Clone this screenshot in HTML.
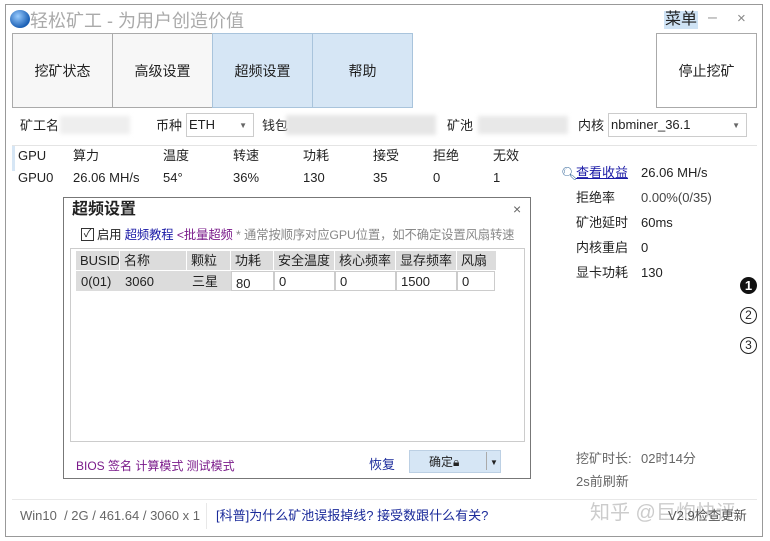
<!DOCTYPE html>
<html><head><meta charset="utf-8"><style>
*{margin:0;padding:0;box-sizing:border-box}
body{width:770px;height:541px;background:#fff;font-family:"Liberation Sans","Noto Sans CJK SC",sans-serif;font-size:13px;color:#222;position:relative;overflow:hidden;line-height:16px}
.a{position:absolute;white-space:nowrap;line-height:16px}
.tab{position:absolute;top:33px;height:75px;width:101px;border:1px solid #aaa;background:#f7f7f7;font-size:14px;display:flex;align-items:center;justify-content:center}
.blue{background:#d6e6f5;border-color:#a9c4dc}
.box{position:absolute;border:1px solid #ccc;background:#fff;height:24px}
.blur{position:absolute;background:#ddd;filter:blur(2px)}
.th{position:absolute;top:251px;height:19px;background:#dcdcdc;border-right:1px solid #fff;padding:2px 4px;font-size:13px;line-height:16px}
.td{position:absolute;top:271px;height:20px;padding:2px 4px;font-size:13px;line-height:16px;border:1px solid #ccc;background:#fff}
.g{background:#dcdcdc;border-color:#dcdcdc}
</style></head><body>
<div class="a" style="left:5px;top:4px;width:758px;height:533px;border:1px solid #999"></div>
<div class="a" style="left:10px;top:10px;width:20px;height:18px;border-radius:50%;background:radial-gradient(circle at 40% 35%,#9cf,#1a5fb4 70%)"></div>
<div class="a" style="left:30px;top:11px;font-size:18px;line-height:20px;color:#aaa">轻松矿工 - 为用户创造价值</div>
<div class="a" style="left:664px;top:11px;font-size:16px;line-height:18px;background:#cfe3f5;padding:0 1px">菜单</div>
<div class="a" style="left:708px;top:10px;font-size:16px;color:#999">–</div>
<div class="a" style="left:737px;top:11px;font-size:15px;color:#888">×</div>
<div class="tab" style="left:12px">挖矿状态</div>
<div class="tab" style="left:112px">高级设置</div>
<div class="tab blue" style="left:212px">超频设置</div>
<div class="tab blue" style="left:312px">帮助</div>
<div class="tab" style="left:656px;background:#fff">停止挖矿</div>
<div class="a" style="left:20px;top:118px">矿工名</div>
<div class="blur" style="left:60px;top:116px;width:70px;height:18px;background:#eee"></div>
<div class="a" style="left:156px;top:118px">币种</div>
<div class="box" style="left:186px;top:113px;width:68px"><span style="position:absolute;left:2px;top:3px">ETH</span><span style="position:absolute;right:6px;top:4px;font-size:8px;color:#666">▼</span></div>
<div class="a" style="left:262px;top:118px">钱包</div>
<div class="blur" style="left:286px;top:115px;width:150px;height:20px;background:#e6e6e6"></div>
<div class="a" style="left:447px;top:118px">矿池</div>
<div class="blur" style="left:478px;top:116px;width:90px;height:18px;background:#e8e8e8"></div>
<div class="a" style="left:578px;top:118px">内核</div>
<div class="box" style="left:608px;top:113px;width:139px"><span style="position:absolute;left:2px;top:3px">nbminer_36.1</span><span style="position:absolute;right:6px;top:4px;font-size:8px;color:#666">▼</span></div>
<div class="a" style="left:12px;top:145px;width:745px;border-top:1px solid #e4e4e4"></div>
<div class="a" style="left:12px;top:146px;width:3px;height:25px;background:#d6e6f5"></div>
<div class="a" style="left:18px;top:148px">GPU</div><div class="a" style="left:73px;top:148px">算力</div><div class="a" style="left:163px;top:148px">温度</div><div class="a" style="left:233px;top:148px">转速</div><div class="a" style="left:303px;top:148px">功耗</div><div class="a" style="left:373px;top:148px">接受</div><div class="a" style="left:433px;top:148px">拒绝</div><div class="a" style="left:493px;top:148px">无效</div>
<div class="a" style="left:18px;top:170px">GPU0</div><div class="a" style="left:73px;top:170px">26.06 MH/s</div><div class="a" style="left:163px;top:170px">54°</div><div class="a" style="left:233px;top:170px">36%</div><div class="a" style="left:303px;top:170px">130</div><div class="a" style="left:373px;top:170px">35</div><div class="a" style="left:433px;top:170px">0</div><div class="a" style="left:493px;top:170px">1</div>
<div class="a" style="left:561px;top:166px;font-size:13px;color:#369">🔍︎</div>
<div class="a" style="left:576px;top:165px;color:#1a1aa6;text-decoration:underline">查看收益</div>
<div class="a" style="left:641px;top:165px">26.06 MH/s</div>
<div class="a" style="left:576px;top:190px">拒绝率</div><div class="a" style="left:641px;top:190px;color:#444">0.00%(0/35)</div>
<div class="a" style="left:576px;top:215px">矿池延时</div><div class="a" style="left:641px;top:215px">60ms</div>
<div class="a" style="left:576px;top:240px">内核重启</div><div class="a" style="left:641px;top:240px">0</div>
<div class="a" style="left:576px;top:265px">显卡功耗</div><div class="a" style="left:641px;top:265px">130</div>
<div class="a" style="left:740px;top:277px;width:17px;height:17px;border-radius:50%;background:#111;color:#fff;font-size:13px;text-align:center;line-height:17px;font-weight:bold">1</div>
<div class="a" style="left:740px;top:307px;width:17px;height:17px;border-radius:50%;border:1.5px solid #222;font-size:12px;text-align:center;line-height:14px">2</div>
<div class="a" style="left:740px;top:337px;width:17px;height:17px;border-radius:50%;border:1.5px solid #222;font-size:12px;text-align:center;line-height:14px">3</div>
<div class="a" style="left:576px;top:451px;color:#666">挖矿时长:</div><div class="a" style="left:641px;top:451px;color:#666">02时14分</div>
<div class="a" style="left:576px;top:474px;color:#666">2s前刷新</div>
<div class="a" style="left:12px;top:499px;width:745px;border-top:1px solid #e8e8e8"></div>
<div class="a" style="left:20px;top:508px;color:#666">Win10 &nbsp;/ 2G / 461.64 / 3060 x 1</div>
<div class="a" style="left:206px;top:503px;height:26px;border-left:1px solid #e8e8e8"></div>
<div class="a" style="left:216px;top:508px;color:#1a2a9a">[科普]为什么矿池误报掉线? 接受数跟什么有关?</div>
<div class="a" style="left:590px;top:501px;font-size:20px;line-height:24px;color:#ccc">知乎 @巨炮快评</div>
<div class="a" style="left:668px;top:508px;color:#555">V2.9检查更新</div>
<!-- dialog -->
<div class="a" style="left:63px;top:197px;width:468px;height:282px;border:1px solid #777;background:#fff"></div>
<div class="a" style="left:72px;top:201px;font-size:16px;line-height:18px;font-weight:bold">超频设置</div>
<div class="a" style="left:513px;top:201px;font-size:14px;color:#666">×</div>
<div class="a" style="left:81px;top:228px;width:13px;height:13px;border:1px solid #333;font-size:11px;line-height:11px;text-align:center">✓</div>
<div class="a" style="left:97px;top:227px;font-size:12.3px;letter-spacing:-0.1px">启用 <span style="color:#1a1aa6">超频教程</span> <span style="color:#7a1a8a">&lt;批量超频</span> <span style="color:#888">* 通常按顺序对应GPU位置，如不确定设置风扇转速</span></div>
<div class="a" style="left:70px;top:248px;width:455px;height:194px;border:1px solid #ccc"></div>
<div class="th" style="left:76px;width:44px">BUSID</div><div class="th" style="left:120px;width:67px">名称</div><div class="th" style="left:187px;width:44px">颗粒</div><div class="th" style="left:231px;width:43px">功耗</div><div class="th" style="left:274px;width:61px">安全温度</div><div class="th" style="left:335px;width:61px">核心频率</div><div class="th" style="left:396px;width:61px">显存频率</div><div class="th" style="left:457px;width:40px">风扇</div>
<div class="td g" style="left:76px;width:44px">0(01)</div><div class="td g" style="left:120px;width:67px">3060</div><div class="td g" style="left:187px;width:44px">三星</div><div class="td" style="left:231px;width:43px;padding-top:4px">80</div><div class="td" style="left:274px;width:61px">0</div><div class="td" style="left:335px;width:61px">0</div><div class="td" style="left:396px;width:61px">1500</div><div class="td" style="left:457px;width:38px">0</div>
<div class="a" style="left:76px;top:458px;color:#7a1a8a;font-size:12px">BIOS 签名 计算模式 测试模式</div>
<div class="a" style="left:369px;top:457px;color:#1a2a9a">恢复</div>
<div class="a" style="left:409px;top:450px;width:92px;height:23px;background:#d6e6f5;border:1px solid #bcd0e4"></div>
<div class="a" style="left:429px;top:454px;font-size:12px">确定🔒︎</div>
<div class="a" style="left:486px;top:452px;height:18px;border-left:1px solid #aaa"></div>
<div class="a" style="left:490px;top:455px;font-size:8px">▼</div>
</body></html>
